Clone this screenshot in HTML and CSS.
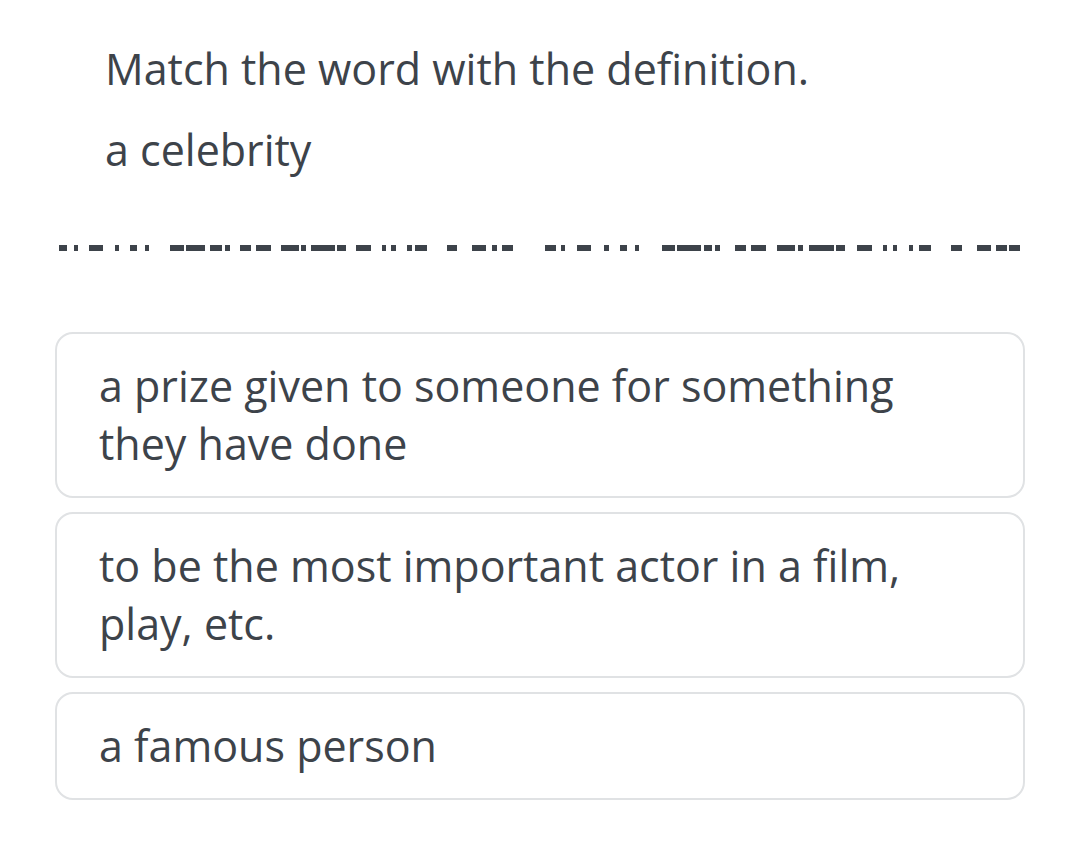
FILE: index.html
```html
<!DOCTYPE html>
<html lang="en">

<head>
  <meta charset="UTF-8">
  <meta name="viewport" content="width=device-width, initial-scale=1.0">
  <title>Match the word</title>
  <link rel="stylesheet" href="styles.css">
</head>

<body>
  <div class="task">
    <div class="prompt">
      <h1 class="title">Match the word with the definition.</h1>
      <p class="word">a celebrity</p>
    </div>

    <!-- пустое место для ответа -->
    <svg class="blank" viewBox="0 0 1080 6" preserveAspectRatio="none">
      <g fill="#3d434a">
        <rect x="59" y="0" width="8" height="6"/>
        <rect x="74" y="0" width="4" height="6"/>
        <rect x="89" y="0" width="14" height="6"/>
        <rect x="115" y="0" width="4" height="6"/>
        <rect x="130" y="0" width="7" height="6"/>
        <rect x="145" y="0" width="4" height="6"/>
        <rect x="170" y="0" width="14" height="6"/>
        <rect x="186" y="0" width="19" height="6"/>
        <rect x="210" y="0" width="12" height="6"/>
        <rect x="225" y="0" width="5" height="6"/>
        <rect x="240" y="0" width="11" height="6"/>
        <rect x="256" y="0" width="15" height="6"/>
        <rect x="281" y="0" width="18" height="6"/>
        <rect x="301" y="0" width="5" height="6"/>
        <rect x="311" y="0" width="24" height="6"/>
        <rect x="337" y="0" width="9" height="6"/>
        <rect x="356" y="0" width="15" height="6"/>
        <rect x="382" y="0" width="4" height="6"/>
        <rect x="391" y="0" width="5" height="6"/>
        <rect x="407" y="0" width="5" height="6"/>
        <rect x="415" y="0" width="12" height="6"/>
        <rect x="447" y="0" width="10" height="6"/>
        <rect x="472" y="0" width="14" height="6"/>
        <rect x="492" y="0" width="5" height="6"/>
        <rect x="502" y="0" width="11" height="6"/>

        <rect x="545" y="0" width="11" height="6"/>
        <rect x="561" y="0" width="4" height="6"/>
        <rect x="577" y="0" width="14" height="6"/>
        <rect x="604" y="0" width="5" height="6"/>
        <rect x="620" y="0" width="7" height="6"/>
        <rect x="635" y="0" width="4" height="6"/>
        <rect x="662" y="0" width="13" height="6"/>
        <rect x="677" y="0" width="24" height="6"/>
        <rect x="704" y="0" width="8" height="6"/>
        <rect x="715" y="0" width="5" height="6"/>
        <rect x="735" y="0" width="11" height="6"/>
        <rect x="751" y="0" width="15" height="6"/>
        <rect x="777" y="0" width="18" height="6"/>
        <rect x="798" y="0" width="5" height="6"/>
        <rect x="809" y="0" width="25" height="6"/>
        <rect x="836" y="0" width="9" height="6"/>
        <rect x="857" y="0" width="15" height="6"/>
        <rect x="883" y="0" width="4" height="6"/>
        <rect x="893" y="0" width="4" height="6"/>
        <rect x="909" y="0" width="4" height="6"/>
        <rect x="919" y="0" width="12" height="6"/>
        <rect x="951" y="0" width="11" height="6"/>
        <rect x="977" y="0" width="14" height="6"/>
        <rect x="996" y="0" width="11" height="6"/>
        <rect x="1009" y="0" width="11" height="6"/>
      </g>
    </svg>

    <div class="options">
      <div class="option">a prize given to someone for something they have done</div>
      <div class="option">to be the most important actor in a film, play, etc.</div>
      <div class="option">a famous person</div>
    </div>
  </div>
</body>

</html>
```

FILE: styles.css
```css
body {
  margin: 0;
  background: #fff;
  color: #3d434a;
  font-family: "Open Sans", "Noto Sans", sans-serif;
}

.task {
  padding: 39px 0 40px;
}

.prompt {
  padding-left: 105px;
}

.title {
  margin: 0;
  font-size: 43px;
  font-weight: 400;
  line-height: 60px;
}

.word {
  margin: 21px 0 0;
  font-size: 43px;
  line-height: 60px;
}

.blank {
  display: block;
  width: 1080px;
  height: 6px;
  margin-top: 65px;
}

.options {
  display: flex;
  flex-direction: column;
  gap: 14px;
  margin: 81px 55px 0;
}

.option {
  border: 2px solid #e0e2e4;
  border-radius: 18px;
  padding: 23px 42px;
  font-size: 43px;
  line-height: 58px;
}
```
